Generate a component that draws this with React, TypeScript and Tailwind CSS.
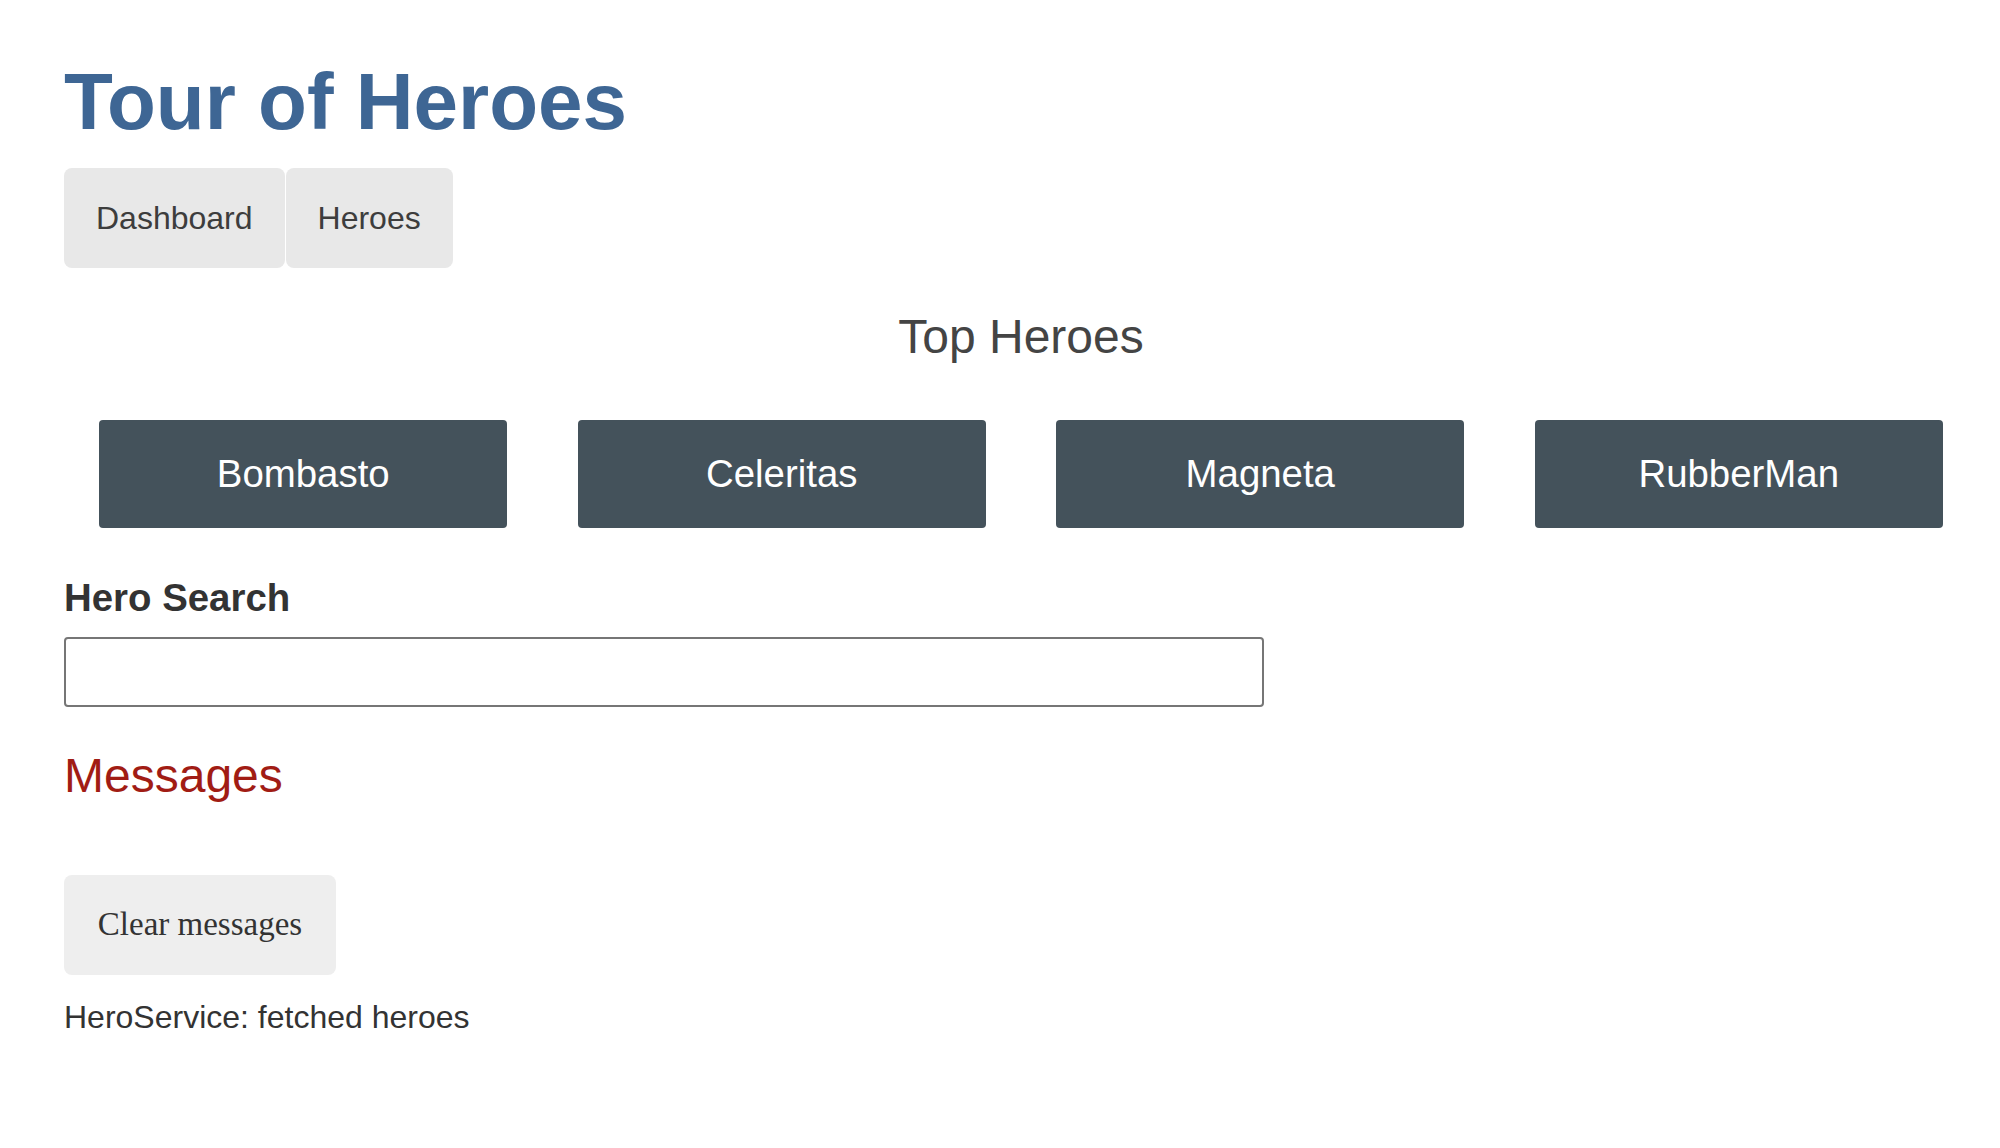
const heroes = ["Bombasto", "Celeritas", "Magneta", "RubberMan"]

function Nav() {
  return (
    <nav className="mt-[20px] flex gap-[1px]">
      {["Dashboard", "Heroes"].map((label) => (
        <a
          key={label}
          href="#"
          className="flex h-[100px] items-center rounded-[8px] bg-[#e8e8e8] px-[32px] text-[32px] text-[#3d3d3d]"
        >
          {label}
        </a>
      ))}
    </nav>
  )
}

function Dashboard() {
  return (
    <div>
      <h2 className="mt-[41px] text-center text-[48px] font-normal leading-[55px] text-[#444]">Top Heroes</h2>
      <div className="mt-[56px] flex justify-around">
        {heroes.map((name) => (
          <a
            key={name}
            href="#"
            className="w-[408px] rounded-[4px] bg-[#44525b] py-[32px] text-center text-[38.4px] leading-[44px] text-white"
          >
            {name}
          </a>
        ))}
      </div>
    </div>
  )
}

function HeroSearch() {
  return (
    <div className="mt-[48px]">
      <label className="block text-[38.4px] font-bold leading-[44px] text-[#333]">Hero Search</label>
      <input
        type="text"
        className="mt-[17px] block h-[70px] w-full max-w-[1200px] rounded-[4px] border-2 border-[#767676] px-[16px] text-[27px]"
      />
    </div>
  )
}

function Messages() {
  return (
    <div className="mt-[41px]">
      <h2 className="text-[48px] font-normal leading-[55px] text-[#a11c14]">Messages</h2>
      <button className="mt-[72px] h-[100px] w-[272px] rounded-[8px] bg-[#eee] text-[33px] text-[#333] [font-family:'Liberation_Serif',serif]">
        Clear messages
      </button>
      <div className="mt-[24px] text-[32px] leading-[37px] text-[#333]">HeroService: fetched heroes</div>
    </div>
  )
}

export default function App() {
  return (
    <div className="min-h-screen bg-white pl-[64px] pr-[22px] pt-[56px] pb-[64px] [font-family:'Liberation_Sans',Arial,sans-serif]">
      <h1 className="text-[80px] font-bold leading-[92px] text-[#3e6694]">Tour of Heroes</h1>
      <Nav />
      <Dashboard />
      <HeroSearch />
      <Messages />
    </div>
  )
}
